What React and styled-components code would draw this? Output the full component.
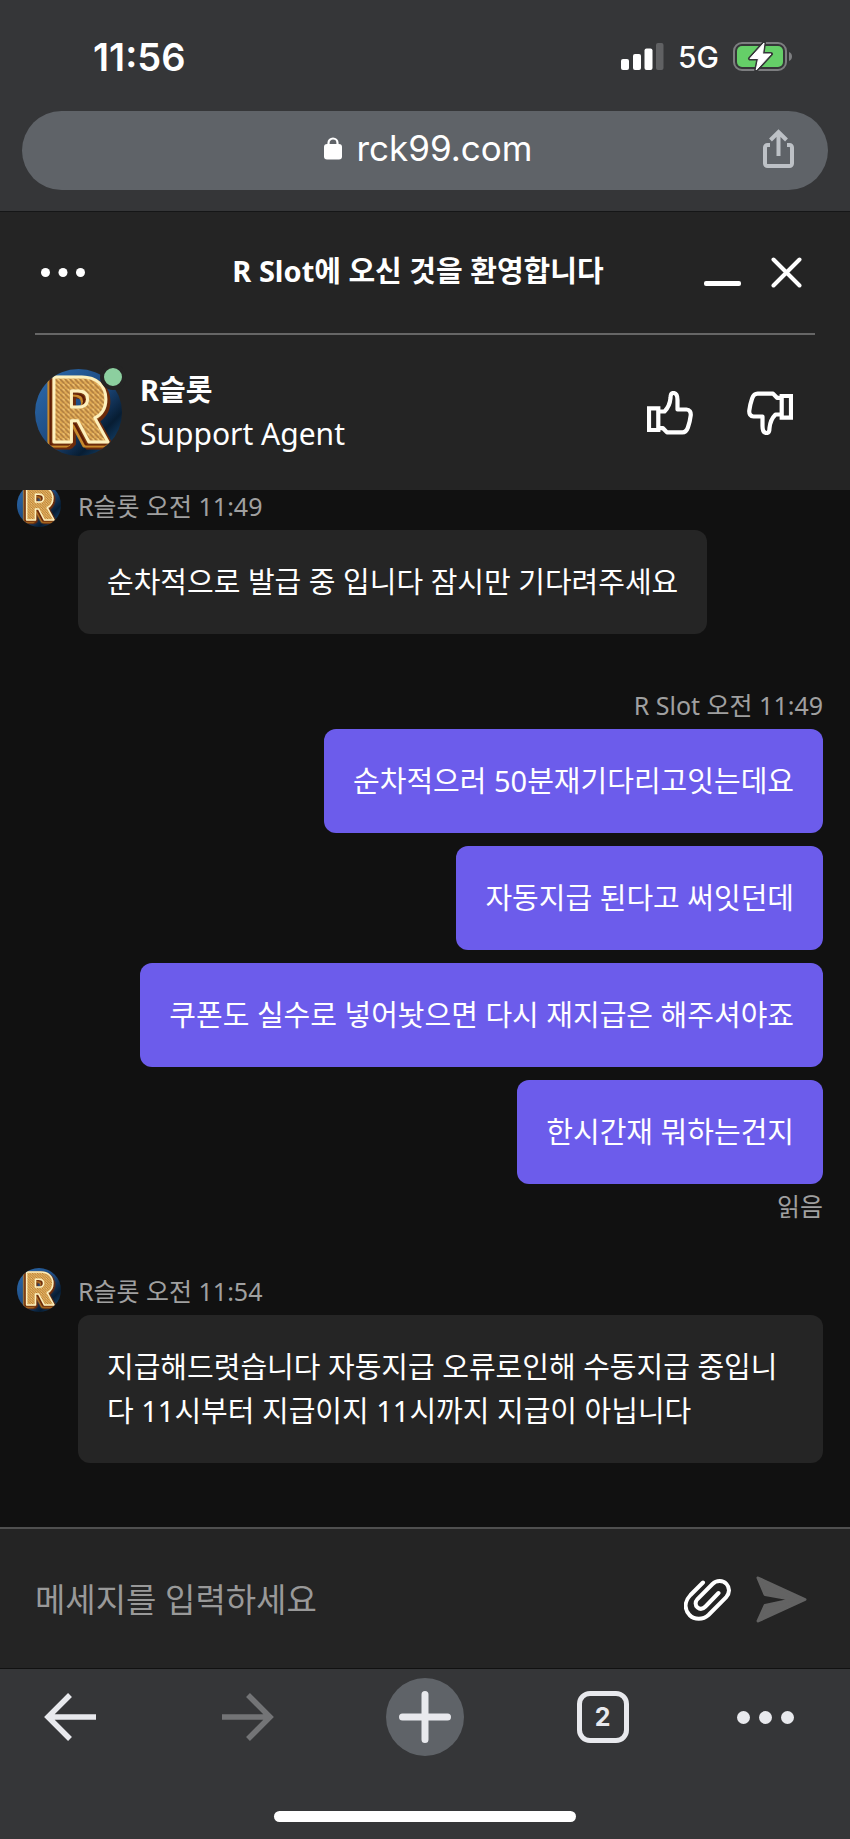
import React from 'react'
import styled, { createGlobalStyle } from 'styled-components';


const messages = [
    {
        from: 'agent',
        meta: 'R슬롯 오전 11:49',
        texts: ['순차적으로 발급 중 입니다 잠시만 기다려주세요'],
    },
    {
        from: 'user',
        meta: 'R Slot 오전 11:49',
        texts: [
            '순차적으러 50분재기다리고잇는데요',
            '자동지급 된다고 써잇던데',
            '쿠폰도 실수로 넣어놧으면 다시 재지급은 해주셔야죠',
            '한시간재 뭐하는건지',
        ],
        status: '읽음',
    },
    {
        from: 'agent',
        meta: 'R슬롯 오전 11:54',
        texts: ['지급해드렷습니다 자동지급 오류로인해 수동지급 중입니다 11시부터 지급이지 11시까지 지급이 아닙니다'],
    },
];


function SignalIcon() {
    return (
        <svg width="43" height="27" viewBox="0 0 43 27" fill="#fff" aria-hidden="true">
            <rect x="0" y="16" width="8" height="11" rx="2" />
            <rect x="12" y="11" width="8" height="16" rx="2" />
            <rect x="23.5" y="5.5" width="8" height="21.5" rx="2" />
            <rect x="35" y="0" width="7.5" height="27" rx="2" fill="#606163" />
        </svg>
    )
}

function BatteryIcon() {
    return (
        <svg width="60" height="31" viewBox="0 0 60 31" aria-hidden="true">
            <rect x="1" y="2" width="52" height="27" rx="8" fill="none" stroke="#7d7e80" strokeWidth="2" />
            <path d="M56 11c4 1.500 4 7.500 0 9z" fill="#7d7e80" />
            <rect x="4" y="5" width="46" height="21" rx="5" fill="#65cf68" />
            <path d="M31 2 17 17.500h8.500L23.200 29 38 13h-8.500z" fill="#fff" stroke="#353638" strokeWidth="4" strokeLinejoin="round" />
            <path d="M31 2 17 17.500h8.500L23.200 29 38 13h-8.500z" fill="#fff" stroke="#fff" strokeWidth="1" strokeLinejoin="round" />
        </svg>
    )
}

function LockIcon() {
    return (
        <svg width="18" height="23" viewBox="0 0 18 23" aria-hidden="true">
            <rect x="0" y="7" width="18" height="15.500" rx="3" fill="#fff" />
            <path d="M4.500 9V6a4.500 4.500 0 0 1 9 0v3" fill="none" stroke="#fff" strokeWidth="2.200" />
        </svg>
    )
}

function ShareIcon() {
    return (
        <svg width="31" height="39" viewBox="0 0 31 39" fill="none" stroke="#bdc1c6" strokeWidth="4" aria-hidden="true">
            <path d="M7 16H4.500A2.500 2.500 0 0 0 2 18.500v16A2.500 2.500 0 0 0 4.500 37h22a2.500 2.500 0 0 0 2.500-2.500v-16a2.500 2.500 0 0 0-2.500-2.500H24" />
            <path d="M15.500 27V4M7.500 11l8-8 8 8" />
        </svg>
    )
}

function DotsIcon({ size, step, color }) {
    const width = size + step * 2;
    return (
        <svg width={width} height={size} viewBox={`0 0 ${width} ${size}`} fill={color} aria-hidden="true">
            {[0, 1, 2].map((n) => (
                <circle key={n} cx={size / 2 + n * step} cy={size / 2} r={size / 2} />
            ))}
        </svg>
    )
}

function MinimizeIcon() {
    return (
        <svg width="37" height="31" viewBox="0 0 37 31" aria-hidden="true">
            <rect x="0" y="24" width="37" height="5" rx="2" fill="#fff" />
        </svg>
    )
}

function CloseIcon() {
    return (
        <svg width="31" height="31" viewBox="0 0 31 31" stroke="#fff" strokeWidth="4" strokeLinecap="round" aria-hidden="true">
            <path d="M2.500 2.500l26 26M28.500 2.500l-26 26" />
        </svg>
    )
}

function ThumbIcon() {
    return (
        <svg width="46" height="44" viewBox="0 0 46 44" fill="none" stroke="#fff" strokeWidth="4.200" aria-hidden="true">
            <path d="M2 17.300h9.300V39H2z" />
            <path strokeLinejoin="round" d="M12 20.500h5.500c4-4 5.500-8 6-13.500 0-3 .8-5 2.800-5 2.800 0 4.200 2.500 4.200 7v9.500h9c3 0 4.600 2.600 4.200 6-.6 5-1.600 8.500-2.800 12-.9 2.600-2.400 4.900-5.500 4.900H20l-4-4.200h-4" />
        </svg>
    )
}

function ClipIcon() {
    return (
        <svg width="47" height="42" viewBox="0 0 47 42" fill="none" stroke="#fff" strokeWidth="4" strokeLinecap="round" aria-hidden="true">
            <path d="M19 3.500 6.500 16C-.5 23.500 1 31 5.500 36c5 5 13.500 5 19 0L42 18.500c4-4.500 3.800-10 .5-13.500C39 1.200 32.500 1 28.500 5L13.500 20c-2.500 2.800-2.500 6.500 0 8.500 2.500 2 5.500 1.500 8-1l13-13.500" />
        </svg>
    )
}

function SendIcon() {
    return (
        <svg width="51" height="47" viewBox="0 0 51 47" fill="#636363" stroke="#636363" strokeWidth="3" strokeLinejoin="round" aria-hidden="true">
            <path d="M2 2 49 23.500 2 45 9 29.500 37 23.500 9 18.500z" />
        </svg>
    )
}

function ArrowIcon({ color }) {
    return (
        <svg width="52" height="48" viewBox="0 0 52 48" fill="none" stroke={color} strokeWidth="5.500" aria-hidden="true">
            <path d="M52 24H5M26 2 4 24l22 22" />
        </svg>
    )
}

function PlusIcon() {
    return (
        <svg width="52" height="52" viewBox="0 0 52 52" stroke="#e8e9ed" strokeWidth="7" strokeLinecap="round" aria-hidden="true">
            <path d="M26 3.500v45M3.500 26h45" />
        </svg>
    )
}

function AgentLogo({ id }) {
    const face = `face-${id}`;
    const back = `back-${id}`;
    return (
        <LogoSvg viewBox="0 0 88 88" role="img" aria-label="R슬롯">
            <defs>
                <linearGradient id={back} x1="0" y1="0" x2="1" y2="1">
                    <stop offset="0" stopColor="#2d6db0" />
                    <stop offset="0.500" stopColor="#1d4a80" />
                    <stop offset="0.750" stopColor="#071d33" />
                    <stop offset="1" stopColor="#1b588f" />
                </linearGradient>
                <pattern id={face} width="5" height="5" patternUnits="userSpaceOnUse">
                    <rect width="5" height="5" fill="#e3ad55" />
                    <path d="M0 0l5 5" stroke="#a5733b" strokeWidth="1.500" />
                    <path d="M3 0l2 2" stroke="#f6d28a" strokeWidth="1" />
                </pattern>
            </defs>
            <rect width="88" height="88" fill={`url(#${back})`} />
            <LogoLetter x="45" y="74" textAnchor="middle" fill={`url(#${face})`}>R</LogoLetter>
        </LogoSvg>
    )
}


function App() {
    return (
        <>
            <GlobalStyle />
            <Page>
                <BrowserTop>
                    <StatusBar>
                        <Clock>11:56</Clock>
                        <StatusIcons>
                            <SignalIcon />
                            <span>5G</span>
                            <BatteryIcon />
                        </StatusIcons>
                    </StatusBar>
                    <AddressBar>
                        <Address type="button">
                            <LockIcon />
                            <span>rck99.com</span>
                        </Address>
                        <ShareButton type="button" aria-label="공유">
                            <ShareIcon />
                        </ShareButton>
                    </AddressBar>
                </BrowserTop>

                <ChatHeader>
                    <TitleRow>
                        <MenuButton type="button" aria-label="메뉴">
                            <DotsIcon size={9} step={17.5} color="#fff" />
                        </MenuButton>
                        <Title>R Slot에 오신 것을 환영합니다</Title>
                        <WindowButtons>
                            <IconButton type="button" aria-label="최소화"><MinimizeIcon /></IconButton>
                            <IconButton type="button" aria-label="닫기"><CloseIcon /></IconButton>
                        </WindowButtons>
                    </TitleRow>
                    <Divider />
                    <AgentRow>
                        <AgentAvatar>
                            <AgentLogo id="agent" />
                            <OnlineDot />
                        </AgentAvatar>
                        <AgentInfo>
                            <strong>R슬롯</strong>
                            <span>Support Agent</span>
                        </AgentInfo>
                        <RateButtons>
                            <IconButton type="button" aria-label="좋아요"><ThumbIcon /></IconButton>
                            <IconButton type="button" aria-label="싫어요" $flip><ThumbIcon /></IconButton>
                        </RateButtons>
                    </AgentRow>
                </ChatHeader>

                <Messages>
                    {messages.map((group, i) => (
                        <Group key={i} $user={group.from === 'user'}>
                            <Meta $user={group.from === 'user'}>
                                {group.from === 'agent' && <SmallAvatar><AgentLogo id={`m${i}`} /></SmallAvatar>}
                                <span>{group.meta}</span>
                            </Meta>
                            <Bubbles $user={group.from === 'user'}>
                                {group.texts.map((text) => (
                                    <Bubble key={text} $user={group.from === 'user'}>{text}</Bubble>
                                ))}
                            </Bubbles>
                            {group.status && <ReadStatus>{group.status}</ReadStatus>}
                        </Group>
                    ))}
                </Messages>

                <Composer>
                    <MessageInput type="text" placeholder="메세지를 입력하세요" aria-label="메세지" />
                    <IconButton type="button" aria-label="파일 첨부"><ClipIcon /></IconButton>
                    <IconButton type="button" aria-label="보내기"><SendIcon /></IconButton>
                </Composer>

                <BrowserBottom>
                    <Toolbar>
                        <ToolButton type="button" aria-label="뒤로"><ArrowIcon color="#e8e9ed" /></ToolButton>
                        <ToolButton type="button" aria-label="앞으로" $flip><ArrowIcon color="#737476" /></ToolButton>
                        <ToolButton type="button" aria-label="새 탭">
                            <PlusCircle><PlusIcon /></PlusCircle>
                        </ToolButton>
                        <ToolButton type="button" aria-label="탭 2개">
                            <TabCount>2</TabCount>
                        </ToolButton>
                        <ToolButton type="button" aria-label="더보기" $start>
                            <DotsIcon size={13} step={22} color="#e8e9ed" />
                        </ToolButton>
                    </Toolbar>
                    <HomeIndicator />
                </BrowserBottom>
            </Page>
        </>
    )
}


const GlobalStyle = createGlobalStyle`
    * {
        box-sizing: border-box;
    }
    body {
        margin: 0;
        background-color: #111111;
        color: #fff;
        font-family: "Noto Sans", "Noto Sans CJK KR", sans-serif;
    }
    button {
        padding: 0;
        border: 0;
        background: none;
        color: inherit;
        font: inherit;
        cursor: pointer;
    }
    svg {
        display: block;
    }
`;

const Page = styled.div`
    display: flex;
    flex-direction: column;
    height: 100vh;
`;

const BrowserTop = styled.header`
    flex: none;
    padding: 0 22px 21px;
    background-color: #353638;
    border-bottom: 1px solid #151617;
    font-family: Inter, sans-serif;
`;

const StatusBar = styled.div`
    display: flex;
    justify-content: space-between;
    align-items: center;
    height: 111px;
    padding: 2px 35px 0 71px;
`;

const Clock = styled.time`
    font-size: 38px;
    font-weight: 600;
`;

const StatusIcons = styled.div`
    display: flex;
    align-items: center;
    gap: 14px;
    font-size: 30px;
    font-weight: 500;
`;

const AddressBar = styled.div`
    display: grid;
    grid-template-columns: 1fr auto 1fr;
    align-items: center;
    height: 79px;
    padding: 0 34px 5px 41px;
    border-radius: 40px;
    background-color: #5f6368;
`;

const Address = styled.button`
    grid-column: 2;
    display: flex;
    align-items: center;
    gap: 14px;
    font-size: 35px;
`;

const ShareButton = styled.button`
    justify-self: end;
`;

const ChatHeader = styled.section`
    flex: none;
    background-color: #242424;
`;

const TitleRow = styled.div`
    display: grid;
    grid-template-columns: 1fr auto 1fr;
    align-items: center;
    height: 121px;
    padding: 0 48px 0 34px;
`;

const Title = styled.h1`
    margin: 0;
    padding-bottom: 4px;
    font-size: 29px;
    font-weight: 700;
    line-height: 44px;
`;

const IconButton = styled.button`
    flex: none;
    transform: ${({ $flip }) => ($flip ? 'rotate(180deg)' : 'none')};
`;

const MenuButton = styled(IconButton)`
    justify-self: start;
    padding: 7px;
`;

const WindowButtons = styled.div`
    display: flex;
    justify-content: flex-end;
    gap: 30px;
`;

const Divider = styled.hr`
    height: 2px;
    margin: 0 35px;
    border: 0;
    background-color: #666666;
`;

const AgentRow = styled.div`
    display: flex;
    align-items: center;
    gap: 18px;
    height: 155px;
    padding: 0 57px 0 35px;
`;

const AgentAvatar = styled.div`
    position: relative;
    width: 87px;
    height: 87px;
`;

const OnlineDot = styled.span`
    position: absolute;
    top: -5px;
    right: -4px;
    width: 26px;
    height: 26px;
    border: 4px solid #242424;
    border-radius: 50%;
    background-color: #8ccf9f;
`;

const LogoSvg = styled.svg`
    width: 100%;
    height: 100%;
    border-radius: 50%;
`;

/* stacked shadows make the gold side of the letter */
const LogoLetter = styled.text`
    font-family: Inter, sans-serif;
    font-size: 90px;
    font-weight: 900;
    stroke: #fdf0bd;
    stroke-width: 3px;
    stroke-linejoin: round;
    filter: drop-shadow(-1px 1px 0 #7a3a10) drop-shadow(-2px 1px 0 #5b1a05) drop-shadow(-2px 2px 0 #c98a2c) drop-shadow(3px 2px 0 #6b2a0a);
`;

const AgentInfo = styled.div`
    display: flex;
    flex-direction: column;
    flex: 1;
    padding-bottom: 2px;
    line-height: 44px;
    strong{
        font-size: 29px;
    }
    span{
        font-size: 30px;
    }
`;

const RateButtons = styled.div`
    display: flex;
    gap: 54px;
`;

const Messages = styled.main`
    display: flex;
    flex-direction: column;
    justify-content: flex-end;
    gap: 44px;
    flex: 1;
    min-height: 0;
    overflow: hidden;
    padding: 0 27px 64px 17px;
    background-color: #111111;
`;

const Group = styled.section`
    display: flex;
    flex-direction: column;
    flex: none;
    align-items: ${({ $user }) => ($user ? 'flex-end' : 'flex-start')};
`;

const Meta = styled.div`
    display: flex;
    align-items: center;
    gap: 17px;
    height: ${({ $user }) => ($user ? '48px' : '44px')};
    padding-top: ${({ $user }) => ($user ? '4px' : '0')};
    margin-bottom: 3px;
    color: #a0a0a0;
    font-size: 25px;
`;

const SmallAvatar = styled.div`
    width: 44px;
    height: 44px;
`;

const Bubbles = styled.div`
    display: flex;
    flex-direction: column;
    gap: 13px;
    align-items: ${({ $user }) => ($user ? 'flex-end' : 'flex-start')};
    padding-left: 61px;
`;

const Bubble = styled.p`
    margin: 0;
    padding: 30px 29px;
    border-radius: 12px;
    background-color: ${({ $user }) => ($user ? '#6c5ceb' : '#252525')};
    font-size: 29px;
    line-height: 44px;
`;

const ReadStatus = styled.small`
    padding-top: 4px;
    color: #a0a0a0;
    font-size: 25px;
    line-height: 36px;
`;

const Composer = styled.form`
    display: flex;
    align-items: center;
    gap: 25px;
    flex: none;
    height: 141px;
    padding: 2px 43px 0 35px;
    border-top: 2px solid #505050;
    background-color: #242424;
`;

const MessageInput = styled.input`
    flex: 1;
    min-width: 0;
    padding: 0;
    border: 0;
    outline: none;
    background: none;
    color: #fff;
    font-family: inherit;
    font-size: 33px;
    &::placeholder{
        color: #999999;
        opacity: 1;
    }
`;

const BrowserBottom = styled.footer`
    display: flex;
    flex-direction: column;
    align-items: center;
    gap: 55px;
    flex: none;
    padding: 9px 27px 17px;
    border-top: 1px solid #111111;
    background-color: #353638;
`;

const Toolbar = styled.nav`
    display: flex;
    justify-content: space-between;
    align-self: stretch;
    height: 78px;
`;

const ToolButton = styled.button`
    display: flex;
    align-items: center;
    justify-content: ${({ $start }) => ($start ? 'flex-start' : 'center')};
    width: 86px;
    transform: ${({ $flip }) => ($flip ? 'rotate(180deg)' : 'none')};
`;

const PlusCircle = styled.span`
    display: grid;
    place-items: center;
    width: 78px;
    height: 78px;
    border-radius: 50%;
    background-color: #5f6368;
`;

const TabCount = styled.span`
    display: grid;
    place-items: center;
    width: 52px;
    height: 52px;
    border: 5px solid #e8e9ed;
    border-radius: 13px;
    color: #e8e9ed;
    font-family: Inter, sans-serif;
    font-size: 25px;
    font-weight: 700;
`;

const HomeIndicator = styled.div`
    width: 38%;
    height: 11px;
    border-radius: 6px;
    background-color: #fff;
`;

export default App
